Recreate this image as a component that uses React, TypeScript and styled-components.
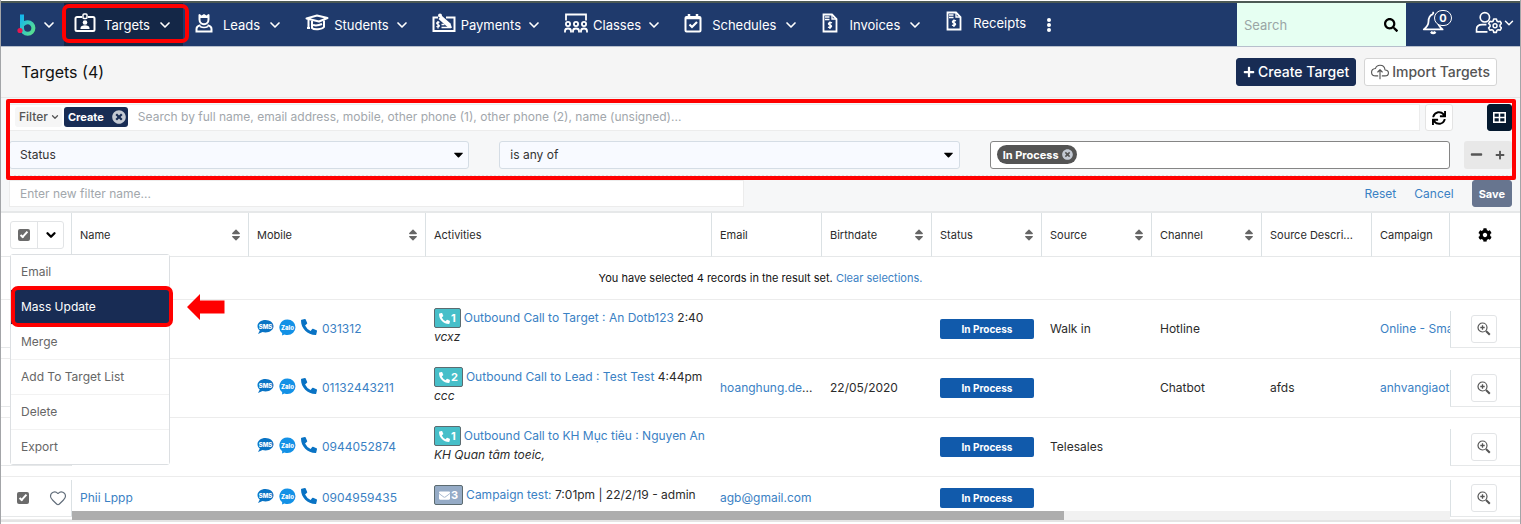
import React from 'react';
import styled, { createGlobalStyle, css } from 'styled-components';
import {
  FaCaretDown, FaCog, FaEnvelope, FaMinus, FaPhoneAlt, FaPlus, FaSearch, FaSort, FaSync, FaTimesCircle,
} from 'react-icons/fa';
import { IoCloudUploadOutline } from 'react-icons/io5';
import { ChevronDown, Heart } from 'lucide-react';

const GlobalStyle = createGlobalStyle`
  *, *::before, *::after { box-sizing: border-box; }
  body {
    margin: 0;
    background: #fff;
    color: #2b2b2b;
    font-family: Inter, "Liberation Sans", sans-serif;
    font-size: 13px;
    line-height: 20px;
  }
  button, input, select { font: inherit; color: inherit; margin: 0; }
  button { cursor: pointer; }
  a { color: #3a81c4; text-decoration: none; }
  svg { display: block; flex: none; }
`;

const Page = styled.div`
  min-height: 100vh;
  border: 1px solid #a3a5a8;
  border-top: 0;
  border-bottom: 0;
  overflow: hidden;
`;

/* ---------- navigation ---------- */

const NavBar = styled.header`
  display: flex;
  height: 46px;
  margin-top: 1px;
  border-top: 2px solid #4d5a55;
  border-bottom: 1px solid #b7bfcc;
  background: #1f3a6c;
  color: #fff;
  font-size: 13px;
`;

const Brand = styled.button`
  display: flex;
  align-items: center;
  gap: 5px;
  width: 63px;
  padding: 0 0 0 15px;
  border: 0;
  background: none;
  color: #fff;
`;

const Menu = styled.nav`
  display: flex;
  flex: 1;
  min-width: 0;
`;

const NavItem = styled.a<{ $wide?: boolean; $active?: boolean; $raised?: boolean }>`
  position: relative;
  display: flex;
  align-items: center;
  gap: ${(p) => (p.$wide ? 5 : 7)}px;
  padding: 0 10px 0 ${(p) => (p.$wide ? 12 : 9)}px;
  ${(p) => p.$raised && css`padding-bottom: 4px;`}
  background: ${(p) => (p.$active ? '#142747' : 'transparent')};
  color: #fff;
`;

const NavIcon = styled.span`
  display: flex;
  justify-content: center;
  width: 24px;
  margin-bottom: 4px;
`;

const NavHighlight = styled.span`
  position: absolute;
  inset: 1px -6px 3px -2px;
  border: 4px solid #f00;
  border-radius: 7px;
  z-index: 1;
`;

const MoreButton = styled.button`
  display: grid;
  gap: 1px;
  align-content: center;
  padding: 0 11px;
  border: 0;
  background: none;
`;

const Dot = styled.span`
  width: 4px;
  height: 4px;
  border-radius: 2px;
  background: #fff;
`;

const SearchBox = styled.label`
  display: flex;
  align-items: center;
  width: 169px;
  padding: 0 8px 0 7px;
  background: #e6fff2;
  color: #000;
`;

const SearchInput = styled.input`
  flex: 1;
  min-width: 0;
  padding: 0;
  border: 0;
  outline: 0;
  background: none;
  font-size: 13px;
  &::placeholder { color: #9aa5a5; opacity: 1; }
`;

const UserTools = styled.div`
  display: flex;
  align-items: center;
  justify-content: space-between;
  width: 114px;
  padding: 0 4px 4px 16px;
`;

const ToolButton = styled.button`
  position: relative;
  display: flex;
  align-items: center;
  padding: 0;
  border: 0;
  background: none;
  color: #fff;
`;

const Count = styled.span`
  position: absolute;
  left: 12px;
  top: 0;
  width: 18px;
  height: 16px;
  border: 1px solid #fff;
  border-radius: 8px;
  background: #1f3a6c;
  font-size: 11px;
  font-weight: 700;
  line-height: 14px;
  text-align: center;
`;

/* ---------- page title ---------- */

const TitleBar = styled.div`
  display: flex;
  align-items: center;
  gap: 8px;
  height: 51px;
  padding: 0 23px 0 20px;
  border-bottom: 1px solid #e6e6e6;
  background: #f5f5f5;
`;

const Title = styled.h1`
  flex: 1;
  margin: 0;
  color: #111;
  font-size: 16px;
  font-weight: 400;
`;

const TitleButton = styled.button<{ $primary?: boolean }>`
  display: flex;
  align-items: center;
  gap: 3px;
  height: 28px;
  padding: 0 6px;
  border: 1px solid ${(p) => (p.$primary ? '#182c54' : '#d5d5d5')};
  border-radius: 3px;
  background: ${(p) => (p.$primary ? '#182c54' : '#fff')};
  color: ${(p) => (p.$primary ? '#fff' : '#555')};
  font-size: 14px;
  font-weight: 500;
`;

/* ---------- filter ---------- */

const FilterPanel = styled.section`
  position: relative;
  padding: 6px 8px 4px 8px;
  border-bottom: 2px solid #e6e8e9;
  background: #f6f7f8;
`;

const FilterHighlight = styled.div`
  position: absolute;
  inset: 1px 4px auto 5px;
  height: 81px;
  border: 4px solid #f00;
  border-radius: 2px;
  pointer-events: none;
`;

const FilterRow = styled.div`
  display: flex;
  align-items: center;
  height: 27px;
`;

const QuickSearch = styled.div`
  display: flex;
  align-items: center;
  flex: 1;
  height: 27px;
  padding: 0 0 2px 5px;
  border: 1px solid #ececec;
  background: #fff;
`;

const FilterButton = styled.button`
  display: flex;
  align-items: center;
  gap: 2px;
  height: 20px;
  margin-right: 2px;
  padding: 0 2px 0 4px;
  border: 0;
  border-radius: 3px;
  background: #f6f6f6;
  color: #555;
  font-size: 12px;
  font-weight: 500;
`;

const CreateChip = styled.span`
  display: flex;
  align-items: center;
  gap: 8px;
  height: 20px;
  padding: 0 2px 0 4px;
  border-radius: 3px;
  background: #182c54;
  color: #fff;
  font-size: 11px;
  font-weight: 700;
`;

const ChipRemove = styled.button`
  padding: 0;
  border: 0;
  background: none;
  color: #c3c9d3;
`;

const PlainInput = styled.input`
  flex: 1;
  min-width: 0;
  padding: 0 10px;
  border: 0;
  outline: 0;
  background: none;
  font-size: 12px;
  &::placeholder { color: #a2a7ac; opacity: 1; }
`;

const SquareButton = styled.button<{ $dark?: boolean }>`
  display: grid;
  place-items: center;
  width: ${(p) => (p.$dark ? 25 : 28)}px;
  height: 27px;
  margin-left: ${(p) => (p.$dark ? 34 : 5)}px;
  padding: 0;
  border: 1px solid ${(p) => (p.$dark ? '#04192f' : '#e4e4e4')};
  border-radius: 3px;
  background: ${(p) => (p.$dark ? '#04192f' : '#fff')};
  color: ${(p) => (p.$dark ? '#fff' : '#000')};
`;

const Conditions = styled.div`
  display: grid;
  grid-template-columns: 1fr 1fr 1fr;
  gap: 30px;
  flex: 1;
`;

const ConditionRow = styled(FilterRow)`
  height: 36px;
  margin-top: 10px;
  padding-bottom: 7px;
  border-bottom: 2px dotted #dcdfe2;
`;

const SelectWrap = styled.span`
  display: grid;
  grid-template-columns: 1fr 22px;
  align-items: center;
  & > svg { grid-area: 1 / 2; justify-self: center; pointer-events: none; color: #000; }
`;

const Select = styled.select`
  grid-area: 1 / 1 / 2 / 3;
  width: 100%;
  height: 28px;
  padding: 0 10px;
  border: 1px solid #d5dde5;
  border-radius: 3px;
  background: #f8faff;
  appearance: none;
  color: #333;
  font-size: 12px;
`;

const ValueBox = styled.div`
  display: flex;
  align-items: center;
  height: 28px;
  padding-left: 6px;
  border: 1px solid #858585;
  border-radius: 3px;
  background: #fff;
`;

const ValueChip = styled.span`
  display: flex;
  align-items: center;
  gap: 3px;
  height: 19px;
  padding: 0 4px 0 6px;
  border-radius: 10px;
  background: #545454;
  color: #fff;
  font-size: 11px;
  font-weight: 700;
`;

const StepButtons = styled.div`
  display: flex;
  height: 28px;
  margin-left: 14px;
  border-radius: 3px;
  background: #e8e8e8;
`;

const StepButton = styled.button`
  display: grid;
  place-items: center;
  width: 24px;
  padding: 0;
  border: 0;
  background: none;
  color: #555;
`;

const SaveRow = styled(FilterRow)`
  margin-top: 3px;
`;

const NameBox = styled.div`
  display: flex;
  flex: 0 0 735px;
  height: 27px;
  margin-right: auto;
  border: 1px solid #ececec;
  background: #fff;
`;

const TextButton = styled.button`
  padding: 0;
  margin-right: 18px;
  border: 0;
  background: none;
  color: #3a81c4;
  font-size: 12px;
`;

const SaveButton = styled.button`
  height: 27px;
  padding: 0 6px;
  border: 1px solid #67758f;
  border-radius: 3px;
  background: #67758f;
  color: #fff;
  font-size: 11px;
  font-weight: 700;
`;

/* ---------- records ---------- */

const Records = styled.div`
  position: relative;
  border-bottom: 2px solid #e4e4e4;
`;

const Table = styled.table`
  width: 100%;
  border-collapse: separate;
  border-spacing: 0;
  table-layout: fixed;
  font-size: 12px;
`;

const Col = styled.col<{ $w?: number }>`
  width: ${(p) => (p.$w ? `${p.$w}px` : 'auto')};
`;

const Th = styled.th`
  height: 44px;
  padding: 0 5px 0 8px;
  border-right: 1px solid #dbe1e4;
  border-bottom: 1px solid #e6e8e9;
  font-size: 11px;
  font-weight: 400;
  text-align: left;
  white-space: nowrap;
  overflow: hidden;
  &:last-child { border-right: 0; }
`;

const HeadLabel = styled.span`
  display: flex;
  align-items: center;
  justify-content: space-between;
  & > svg { color: #666; }
`;

const SettingsButton = styled.button`
  display: grid;
  place-items: center;
  width: 100%;
  padding: 0 4px 0 0;
  border: 0;
  background: none;
  color: #000;
`;

const CheckHead = styled.th`
  position: relative;
  padding: 0 0 0 9px;
  border-right: 1px solid #dbe1e4;
  border-bottom: 1px solid #e6e8e9;
  text-align: left;
`;

const SelectGroup = styled.span`
  display: inline-flex;
  height: 28px;
  border: 1px solid #e2e4e6;
  border-radius: 3px;
  vertical-align: middle;
`;

const GroupPart = styled.label`
  display: grid;
  place-items: center;
  width: 27px;
  border-right: 1px solid #e2e4e6;
`;

const GroupButton = styled.button`
  display: grid;
  place-items: center;
  width: 25px;
  padding: 0;
  border: 0;
  background: none;
  color: #000;
`;

const Check = styled.input`
  appearance: none;
  display: grid;
  place-items: center;
  width: 12px;
  height: 12px;
  border-radius: 2px;
  background: #6b6b6b;
  &:checked::before {
    content: '';
    width: 4px;
    height: 8px;
    margin-bottom: 2px;
    border: solid #fff;
    border-width: 0 2px 2px 0;
    transform: rotate(42deg);
  }
`;

const Td = styled.td<{ $top?: boolean }>`
  padding: ${(p) => (p.$top ? '8px 8px 0' : '0 8px')};
  border-bottom: 1px solid #ececec;
  vertical-align: ${(p) => (p.$top ? 'top' : 'middle')};
  white-space: nowrap;
  overflow: hidden;
`;

const ClipTd = styled(Td)`
  padding-right: 0;
`;

const Row = styled.tr<{ $short?: boolean }>`
  height: ${(p) => (p.$short ? 43 : 59)}px;
`;

const Message = styled.td`
  height: 43px;
  border-bottom: 1px solid #ececec;
  color: #111;
  font-size: 11px;
  text-align: center;
`;

const PinnedTd = styled.td`
  position: relative;
  padding: 0;
  border-bottom: 1px solid #ececec;
  z-index: 2;
`;

const Pinned = styled.div<{ $side: 'left' | 'right' }>`
  display: flex;
  align-items: center;
  justify-content: ${(p) => (p.$side === 'left' ? 'space-between' : 'center')};
  height: 37px;
  padding: ${(p) => (p.$side === 'left' ? '0 4px 0 16px' : '0 3px 0 0')};
  border-bottom: 1px solid #e6e8e9;
  ${(p) => (p.$side === 'left' ? 'border-right' : 'border-left')}: 1px solid #dbe1e4;
  background: #fff;
`;

const IconButton = styled.button`
  display: grid;
  place-items: center;
  padding: 0;
  border: 0;
  background: none;
  color: #5f6b78;
`;

const ZoomButton = styled.button`
  display: grid;
  place-items: center;
  width: 26px;
  height: 28px;
  padding: 0;
  border: 1px solid #e2e4e6;
  border-radius: 3px;
  background: #fff;
  color: #555;
`;

const Contact = styled.div`
  display: flex;
  align-items: center;
  gap: 5px;
  & > svg { color: #0973c4; margin-bottom: 4px; }
`;

const ActivityLine = styled.div`
  display: flex;
  align-items: center;
  gap: 3px;
  height: 20px;
`;

const Note = styled.div`
  height: 18px;
  line-height: 18px;
  font-style: italic;
`;

const ActivityTag = styled.span<{ $mail?: boolean }>`
  display: flex;
  align-items: center;
  gap: 1px;
  height: 20px;
  padding: 0 4px;
  border: 1px solid #5c6b70;
  border-radius: 2px;
  background: ${(p) => (p.$mail ? '#95abc6' : '#47bfc9')};
  color: #fff;
  font-size: 11px;
  font-weight: 700;
`;

const StatusTag = styled.span`
  display: block;
  height: 20px;
  border-radius: 2px;
  background: #115aab;
  color: #fff;
  font-size: 10px;
  font-weight: 700;
  text-align: center;
`;

const ScrollTrack = styled.div`
  position: absolute;
  left: 71px;
  right: 70px;
  bottom: 0;
  height: 9px;
  background: #f1f1f1;
  z-index: 1;
`;

const ScrollThumb = styled.div`
  width: 72%;
  height: 100%;
  background: #adadad;
`;

/* ---------- bulk action menu ---------- */

const ActionMenu = styled.ul`
  position: absolute;
  top: 41px;
  left: 9px;
  width: 160px;
  margin: 0;
  padding: 0;
  border: 1px solid #dcdfe2;
  border-radius: 3px;
  background: #fff;
  list-style: none;
  font-size: 12px;
  font-weight: 400;
  text-align: left;
  z-index: 5;
`;

const ActionItem = styled.li`
  position: relative;
  border-bottom: 1px solid #f2f2f2;
  &:last-child { border-bottom: 0; }
`;

const ActionButton = styled.button<{ $active?: boolean }>`
  display: block;
  width: 100%;
  height: 34px;
  padding: 0 10px;
  border: 0;
  background: ${(p) => (p.$active ? '#182c54' : '#fff')};
  color: ${(p) => (p.$active ? '#fff' : '#666')};
  text-align: left;
`;

const ActionHighlight = styled.span`
  position: absolute;
  inset: -4px -4px -3px 0;
  border: 4px solid #f00;
  border-radius: 7px;
  z-index: 1;
  pointer-events: none;
`;

const Pointer = styled.svg`
  position: absolute;
  left: 176px;
  top: 3px;
`;

/* ---------- drawings ---------- */

const Logo = () => (
  <svg width="20" height="24" viewBox="0 0 20 24" fill="none">
    <defs>
      <linearGradient id="brand" x1="0" y1="0" x2="1" y2="1">
        <stop offset="0" stopColor="#12b5ef" />
        <stop offset="1" stopColor="#5be08c" />
      </linearGradient>
    </defs>
    <path d="M6 1.500V15a5.700 5.700 0 1 0 5.700-5.700q-3 0-5 2.500" stroke="url(#brand)" strokeWidth="4" />
    <circle cx="4" cy="17.500" r="2.600" fill="#e8174f" />
  </svg>
);

const IdIcon = () => (
  <svg width="22" height="20" viewBox="0 0 22 20" fill="none" stroke="#fff" strokeWidth="2">
    <path d="M8 4H3a1.500 1.500 0 0 0-1.500 1.500v11A1.500 1.500 0 0 0 3 18h16a1.500 1.500 0 0 0 1.500-1.500v-11A1.500 1.500 0 0 0 19 4h-5" />
    <rect x="9" y="1" width="4" height="4.500" rx="1" strokeWidth="1.500" />
    <circle cx="11" cy="9.500" r="2.300" fill="#fff" stroke="none" />
    <path d="M6.500 16v-1c0-2 2-2.800 4.500-2.800s4.500.8 4.500 2.800v1z" fill="#fff" stroke="none" />
  </svg>
);

const LeadIcon = () => (
  <svg width="18" height="20" viewBox="0 0 18 20" fill="none" stroke="#fff" strokeWidth="2">
    <path d="M4.500 1.500v5a4.500 4.800 0 0 0 9 0v-5" />
    <path d="M4 1l2.500 1.500L9 1l2.500 1.500L14 1v4H4z" fill="#fff" stroke="none" />
    <path d="M5.500 12.200C3 12.800 1.500 14 1.500 16v2.500h15V16c0-2-1.500-3.200-4-3.800" strokeWidth="2" />
    <path d="M5 13.500q4 2 8 0" strokeWidth="1.500" />
  </svg>
);

const StudentIcon = () => (
  <svg width="24" height="18" viewBox="0 0 24 18" fill="none" stroke="#fff" strokeWidth="2" strokeLinejoin="round">
    <path d="M1.500 4.500 12 1.500l10.500 2.500L14 7.500z" />
    <path d="M7 7v7c2 2 10 1.500 12-1V6.500" />
    <path d="M3.500 5.500v8M2 14h3M8 11c3 .8 6 .3 9-1" />
  </svg>
);

const PaymentIcon = () => (
  <svg width="24" height="20" viewBox="0 0 24 20" fill="none" stroke="#fff">
    <path d="M6 4.500H1.500V18h21V4.500H14" strokeWidth="2" />
    <path d="M9.500 2.500 18.500 10.500l1.500 4.500-4.500-1L6.500 6z" fill="#fff" stroke="none" />
    <circle cx="8" cy="2.500" r="2" fill="#fff" stroke="none" />
    <path d="M9.500 11.500h3M9.500 14.500h9.500" strokeWidth="1.400" />
    <path d="M7.500 9.300c-2.800-.8-3.800 1.500-1.500 2.200s1.500 3-1.700 2M6 8v7.500" strokeWidth="1.300" />
  </svg>
);

const ClassIcon = () => (
  <svg width="24" height="20" viewBox="0 0 24 20" fill="none" stroke="#fff" strokeWidth="1.800">
    <path d="M2 7.500V1.500h20v6" />
    {[4, 12, 20].map((x) => (
      <g key={x}>
        <circle cx={x} cy="11" r="2.100" />
        <path d={`M${x - 3} 19.500v-1.500q0-2.500 3-2.500t3 2.500v1.500`} />
      </g>
    ))}
  </svg>
);

const ScheduleIcon = () => (
  <svg width="18" height="20" viewBox="0 0 18 20" fill="none" stroke="#fff" strokeWidth="2">
    <rect x="1.500" y="4" width="15" height="14.500" rx="1" />
    <path d="M5 1v4M13 1v4M2 5h14" strokeWidth="2.500" />
    <path d="m5.500 11.500 2.500 2.500 5-5" strokeWidth="2.200" />
  </svg>
);

const BillIcon = () => (
  <svg width="16" height="20" viewBox="0 0 16 20" fill="none" stroke="#fff" strokeWidth="1.800">
    <path d="M1.500 1.500H10L14.500 6v12.500h-13z" />
    <path d="M10 1.500V6h4.500M3 4h4.500M3 6.500h4.500" strokeWidth="1.300" />
    <path d="M10 9.800c-3-1.200-5 1.300-2 2.200s1 3.500-2 2.200M8 8.500v7.500" strokeWidth="1.400" />
  </svg>
);

const BellIcon = () => (
  <svg width="33" height="26" viewBox="0 0 28 22" fill="none" stroke="#fff" strokeWidth="1.500" strokeLinejoin="round">
    <path d="M9.500 3.500C6 4.500 5.500 7 5.500 10c0 3-1.500 4.500-4 6.500h16c-2.500-2-4-3.500-4-6.500V5" />
    <path d="M7.500 18.500q2 2 4 0" strokeWidth="2" />
    <path d="M9.500 1.500v2" />
  </svg>
);

const UserIcon = () => (
  <svg width="27" height="23" viewBox="0 0 26 22" fill="none" stroke="#fff" strokeWidth="1.600">
    <circle cx="9.500" cy="6" r="4.500" />
    <path d="M12 20H1.500v-2.500c0-3.500 2.500-4.500 5.500-4.500h4" />
    <path d="m18 7.700h2.600l.5 1.900 1.300.7 1.900-.5 1.200 2.200-1.400 1.400v1.400l1.400 1.400-1.200 2.200-1.900-.5-1.300.7-.5 1.900H18l-.5-1.900-1.300-.7-1.900.5-1.200-2.200 1.400-1.400v-1.400l-1.400-1.400 1.200-2.200 1.900.5 1.300-.7z" strokeWidth="1.500" strokeLinejoin="round" />
    <circle cx="19.300" cy="14.100" r="1.900" strokeWidth="1.400" />
  </svg>
);

const GridIcon = () => (
  <svg width="13" height="11" viewBox="0 0 13 11" fill="none" stroke="#fff">
    <rect x=".8" y=".8" width="11.400" height="9.400" strokeWidth="1.600" />
    <path d="M6.500 1v9M1 5.500h11" strokeWidth="1.500" />
  </svg>
);

const ZoomIcon = () => (
  <svg width="14" height="14" viewBox="0 0 14 14" fill="none" stroke="currentColor">
    <circle cx="5.500" cy="5.500" r="4.500" strokeWidth="1.200" />
    <path d="M3.300 5.500h4.400M5.500 3.300v4.400" strokeWidth="1.300" />
    <path d="m9 9 3.800 3.800" strokeWidth="2" />
  </svg>
);

const SmsIcon = () => (
  <svg width="17" height="16" viewBox="0 0 17 16">
    <path d="M8.500 1C4 1 .5 3.700.5 7c0 2 1 3.600 2.300 4.600L1 15l4.500-2q1.500.4 3 .4c4.500 0 8-2.800 8-6.200S13 1 8.500 1z" fill="#0973c4" />
    <text x="8.500" y="9.500" fill="#fff" fontSize="6" fontWeight="800" textAnchor="middle">SMS</text>
  </svg>
);

const ZaloIcon = () => (
  <svg width="17" height="17" viewBox="0 0 17 17">
    <path d="M8.500.5a8 7.800 0 0 1 0 15.600q-1.500 0-3-.6L3 16.500l.2-2.300A8 7.800 0 0 1 8.500.5z" fill="#1391e6" />
    <text x="8.500" y="10.500" fill="#fff" fontSize="6" fontWeight="800" textAnchor="middle">Zalo</text>
  </svg>
);

/* ---------- data ---------- */

type NavEntry = { label: string; icon: React.ReactNode; wide?: boolean; active?: boolean; flat?: boolean };

const navEntries: NavEntry[] = [
  { label: 'Targets', icon: <IdIcon />, active: true },
  { label: 'Leads', icon: <LeadIcon /> },
  { label: 'Students', icon: <StudentIcon />, wide: true },
  { label: 'Payments', icon: <PaymentIcon />, wide: true },
  { label: 'Classes', icon: <ClassIcon />, wide: true },
  { label: 'Schedules', icon: <ScheduleIcon /> },
  { label: 'Invoices', icon: <BillIcon /> },
  { label: 'Receipts', icon: <BillIcon />, flat: true },
];

const columns = [
  { label: 'Name', width: 177, sort: true },
  { label: 'Mobile', width: 177, sort: true },
  { label: 'Activities' },
  { label: 'Email', width: 110 },
  { label: 'Birthdate', width: 110, sort: true },
  { label: 'Status', width: 110, sort: true },
  { label: 'Source', width: 110, sort: true },
  { label: 'Channel', width: 110, sort: true },
  { label: 'Source Descri...', width: 110 },
  { label: 'Campaign', width: 78 },
];

type RecordData = {
  name: string; phone: string; count: number; activity: string; when?: string; note?: string; mail?: boolean;
  email?: string; longEmail?: boolean; birthdate?: string; source?: string; channel?: string;
  description?: string; campaign?: string;
};

const records: RecordData[] = [
  { name: '', phone: '031312', count: 1, activity: 'Outbound Call to Target : An Dotb123', when: '2:40', note: 'vcxz', source: 'Walk in', channel: 'Hotline', campaign: 'Online - Sma' },
  { name: '', phone: '01132443211', count: 2, activity: 'Outbound Call to Lead : Test Test', when: '4:44pm', note: 'ccc', email: 'hoanghung.de', longEmail: true, birthdate: '22/05/2020', channel: 'Chatbot', description: 'afds', campaign: 'anhvangiaoti' },
  { name: '', phone: '0944052874', count: 1, activity: 'Outbound Call to KH Mục tiêu : Nguyen An', note: 'KH Quan tâm toeic,', source: 'Telesales' },
  { name: 'Phii Lppp', phone: '0904959435', count: 3, activity: 'Campaign test:', when: '7:01pm | 22/2/19 - admin', mail: true, email: 'agb@gmail.com' },
];

const actions = ['Email', 'Mass Update', 'Merge', 'Add To Target List', 'Delete', 'Export'];

const RecordRow = ({ r }: { r: RecordData }) => (
  <Row $short={r.mail}>
    <PinnedTd>
      <Pinned $side="left">
        <Check type="checkbox" defaultChecked aria-label={`Select ${r.name || r.phone}`} />
        <IconButton aria-label="Favorite"><Heart size={18} strokeWidth={1.5} /></IconButton>
      </Pinned>
    </PinnedTd>
    <Td><a href="#record">{r.name}</a></Td>
    <Td>
      <Contact>
        <SmsIcon />
        <ZaloIcon />
        <FaPhoneAlt size={16} />
        <a href="#call">{r.phone}</a>
      </Contact>
    </Td>
    <Td $top>
      <ActivityLine>
        <ActivityTag $mail={r.mail}>
          {r.mail ? <FaEnvelope size={11} /> : <FaPhoneAlt size={11} />}
          {r.count}
        </ActivityTag>
        <span><a href="#activity">{r.activity}</a> {r.when}</span>
      </ActivityLine>
      {r.note && <Note>{r.note}</Note>}
    </Td>
    <Td><a href="#email">{r.email}</a>{r.longEmail && '...'}</Td>
    <Td>{r.birthdate}</Td>
    <Td><StatusTag>In Process</StatusTag></Td>
    <Td>{r.source}</Td>
    <Td>{r.channel}</Td>
    <Td>{r.description}</Td>
    <ClipTd><a href="#campaign">{r.campaign}</a></ClipTd>
    <PinnedTd>
      <Pinned $side="right">
        <ZoomButton aria-label="Preview"><ZoomIcon /></ZoomButton>
      </Pinned>
    </PinnedTd>
  </Row>
);

export default function App() {
  return (
    <Page>
      <GlobalStyle />
      <NavBar>
        <Brand aria-label="Home"><Logo /><ChevronDown size={16} strokeWidth={2.5} /></Brand>
        <Menu>
          {navEntries.map((n) => (
            <NavItem key={n.label} href="#module" $wide={n.wide} $active={n.active} $raised={n.flat}>
              <NavIcon>{n.icon}</NavIcon>
              {n.label}
              {!n.flat && <ChevronDown size={16} strokeWidth={2.5} />}
              {n.active && <NavHighlight />}
            </NavItem>
          ))}
          <MoreButton aria-label="More modules"><Dot /><Dot /><Dot /></MoreButton>
        </Menu>
        <SearchBox>
          <SearchInput placeholder="Search" aria-label="Search" />
          <FaSearch size={14} />
        </SearchBox>
        <UserTools>
          <ToolButton aria-label="Notifications"><BellIcon /><Count>0</Count></ToolButton>
          <ToolButton aria-label="Account"><UserIcon /><ChevronDown size={14} strokeWidth={2.5} /></ToolButton>
        </UserTools>
      </NavBar>

      <TitleBar>
        <Title>Targets (4)</Title>
        <TitleButton $primary><FaPlus size={12} />Create Target</TitleButton>
        <TitleButton><IoCloudUploadOutline size={18} />Import Targets</TitleButton>
      </TitleBar>

      <FilterPanel>
        <FilterRow>
          <QuickSearch>
            <FilterButton>Filter <ChevronDown size={10} strokeWidth={3} /></FilterButton>
            <CreateChip>Create<ChipRemove aria-label="Remove filter"><FaTimesCircle size={14} /></ChipRemove></CreateChip>
            <PlainInput
              aria-label="Search records"
              placeholder="Search by full name, email address, mobile, other phone (1), other phone (2), name (unsigned)..."
            />
          </QuickSearch>
          <SquareButton aria-label="Refresh"><FaSync size={14} /></SquareButton>
          <SquareButton $dark aria-label="Table view"><GridIcon /></SquareButton>
        </FilterRow>
        <ConditionRow>
          <Conditions>
            <SelectWrap>
              <Select aria-label="Field" defaultValue="Status"><option>Status</option></Select>
              <FaCaretDown size={15} />
            </SelectWrap>
            <SelectWrap>
              <Select aria-label="Operator" defaultValue="is any of"><option>is any of</option></Select>
              <FaCaretDown size={15} />
            </SelectWrap>
            <ValueBox>
              <ValueChip>In Process<ChipRemove aria-label="Remove value"><FaTimesCircle size={11} /></ChipRemove></ValueChip>
              <PlainInput aria-label="Values" />
            </ValueBox>
          </Conditions>
          <StepButtons>
            <StepButton aria-label="Remove condition"><FaMinus size={13} /></StepButton>
            <StepButton aria-label="Add condition"><FaPlus size={10} /></StepButton>
          </StepButtons>
        </ConditionRow>
        <SaveRow>
          <NameBox><PlainInput aria-label="Filter name" placeholder="Enter new filter name..." /></NameBox>
          <TextButton>Reset</TextButton>
          <TextButton>Cancel</TextButton>
          <SaveButton>Save</SaveButton>
        </SaveRow>
        <FilterHighlight />
      </FilterPanel>

      <Records>
        <Table>
          <colgroup>
            <Col $w={71} />
            {columns.map((c) => <Col key={c.label} $w={c.width} />)}
            <Col $w={70} />
          </colgroup>
          <thead>
            <tr>
              <CheckHead>
                <SelectGroup>
                  <GroupPart><Check type="checkbox" defaultChecked aria-label="Select all" /></GroupPart>
                  <GroupButton aria-label="Bulk actions"><ChevronDown size={14} strokeWidth={4} /></GroupButton>
                </SelectGroup>
                <ActionMenu>
                  {actions.map((a) => {
                    const active = a === 'Mass Update';
                    return (
                      <ActionItem key={a}>
                        <ActionButton $active={active}>{a}</ActionButton>
                        {active && (
                          <>
                            <ActionHighlight />
                            <Pointer width="38" height="28" viewBox="0 0 38 28">
                              <path d="M0 14 13 1v6.500h24.500v13H13V27z" fill="#f00" />
                            </Pointer>
                          </>
                        )}
                      </ActionItem>
                    );
                  })}
                </ActionMenu>
              </CheckHead>
              {columns.map((c) => (
                <Th key={c.label}>
                  <HeadLabel>{c.label}{c.sort && <FaSort size={14} />}</HeadLabel>
                </Th>
              ))}
              <Th><SettingsButton aria-label="Column settings"><FaCog size={14} /></SettingsButton></Th>
            </tr>
          </thead>
          <tbody>
            <tr>
              <Message colSpan={12}>
                You have selected 4 records in the result set. <a href="#clear">Clear selections.</a>
              </Message>
            </tr>
            {records.map((r) => <RecordRow key={r.phone} r={r} />)}
          </tbody>
        </Table>
        <ScrollTrack><ScrollThumb /></ScrollTrack>
      </Records>
    </Page>
  );
}
